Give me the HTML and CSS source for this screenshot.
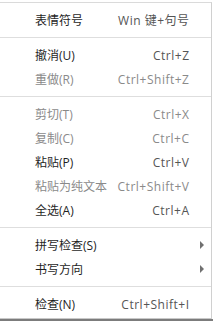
FILE: index.html
```html
<!DOCTYPE html>
<html lang="zh-CN">
<head>
<meta charset="utf-8">
<title>Context menu</title>
<link rel="stylesheet" href="styles.css">
</head>
<body>
<div class="menu">
  <div class="item"><span class="label">表情符号</span><span class="key">Win 键+句号</span><span class="sub"></span></div>
  <div class="sep"></div>
  <div class="item"><span class="label">撤消(U)</span><span class="key">Ctrl+Z</span><span class="sub"></span></div>
  <div class="item disabled"><span class="label">重做(R)</span><span class="key">Ctrl+Shift+Z</span><span class="sub"></span></div>
  <div class="sep"></div>
  <div class="item disabled"><span class="label">剪切(T)</span><span class="key">Ctrl+X</span><span class="sub"></span></div>
  <div class="item disabled"><span class="label">复制(C)</span><span class="key">Ctrl+C</span><span class="sub"></span></div>
  <div class="item"><span class="label">粘贴(P)</span><span class="key">Ctrl+V</span><span class="sub"></span></div>
  <div class="item disabled"><span class="label">粘贴为纯文本</span><span class="key">Ctrl+Shift+V</span><span class="sub"></span></div>
  <div class="item"><span class="label">全选(A)</span><span class="key">Ctrl+A</span><span class="sub"></span></div>
  <div class="sep"></div>
  <div class="item"><span class="label">拼写检查(S)</span><span class="key"></span><span class="sub"><span class="arrow"></span></span></div>
  <div class="item"><span class="label">书写方向</span><span class="key"></span><span class="sub"><span class="arrow"></span></span></div>
  <div class="sep"></div>
  <div class="item"><span class="label">检查(N)</span><span class="key">Ctrl+Shift+I</span><span class="sub"></span></div>
</div>
<div class="shadow"></div>
</body>
</html>
```

FILE: styles.css
```css
html, body {
  margin: 0;
  padding: 0;
  background: #ffffff;
}

body {
  font-family: "Open Sans", "Noto Sans CJK SC", sans-serif;
  font-size: 12px;
  color: #1f1f1f;
  padding-top: 2px;
}

.menu {
  width: 211px;
  border-top: 1px solid #dadada;
  border-right: 1px solid #d0d0d0;
  border-bottom: 1px solid #c8c8c8;
  padding: 5px 0 2px;
  box-sizing: content-box;
}

.item {
  display: grid;
  grid-template-columns: 1fr auto 22px;
  align-items: center;
  height: 24px;
  padding-left: 35px;
}

.label {
  white-space: nowrap;
  color: #1f1f1f;
}

.key {
  white-space: nowrap;
  color: #555555;
  text-align: right;
  letter-spacing: 0.5px;
  margin-right: -0.5px;
}

.item.disabled .label,
.item.disabled .key {
  color: #8a8a8a;
}

.sub {
  display: flex;
  align-items: center;
  padding-left: 11px;
}

.arrow {
  width: 0;
  height: 0;
  border-top: 4px solid transparent;
  border-bottom: 4px solid transparent;
  border-left: 4px solid #707070;
}

.sep {
  height: 1px;
  background: #dedede;
  margin: 5px 0;
}

.shadow {
  height: 4px;
  background: #7c7c7c;
}
```
